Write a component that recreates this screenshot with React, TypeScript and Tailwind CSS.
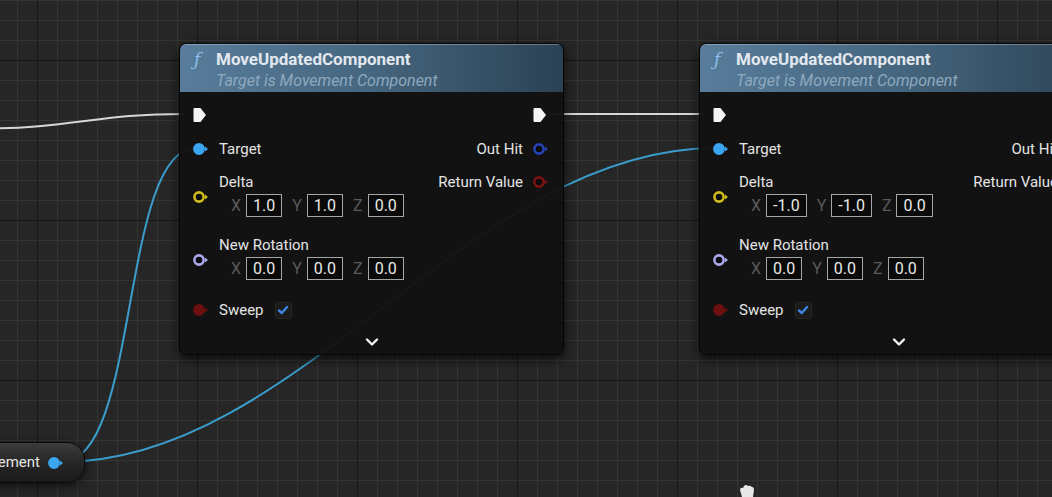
import React from "react";

const ff = "[font-family:Roboto,'Liberation_Sans',sans-serif]";

function ExecPin() {
  return (
    <svg width="14" height="16" viewBox="0 0 14 16">
      <path d="M1.5 1 H7.5 L13 8 L7.5 15 H1.5 Q0.5 15 0.5 14 V2 Q0.5 1 1.5 1 Z" fill="#f4f4f4" />
    </svg>
  );
}

function DataPin({ color, filled = false, arrow = true }: { color: string; filled?: boolean; arrow?: boolean }) {
  return (
    <svg width="16" height="14" viewBox="0 0 16 14">
      <circle cx="6" cy="7" r="4.6" fill={filled ? color : "#0c0c0c"} stroke={color} strokeWidth="2.6" />
      {arrow && <polygon points="12,4.5 15,7 12,9.5" fill={color} />}
    </svg>
  );
}

function Vec({ vals }: { vals: string[] }) {
  const axes = ["X", "Y", "Z"];
  return (
    <div className="flex items-center ml-[12px] h-[23px]">
      {vals.map((v, i) => (
        <div key={i} className={`flex items-center ${i > 0 ? "ml-[10px]" : ""}`}>
          <span className="text-[#5a5a5a] text-[16px] mr-[5px]">{axes[i]}</span>
          <span className="h-[23px] px-[6px] border-[1.5px] border-[#a6a6a6] bg-[#0a0a0a] text-[#e8e8e8] text-[16px] flex items-center">
            {v}
          </span>
        </div>
      ))}
    </div>
  );
}

function Node({ pos, delta }: { pos: string; delta: string[] }) {
  return (
    <div
      className={`absolute top-[43px] ${pos} h-[312px] rounded-[7px] border border-[#050505] bg-[#121212]/[0.96] shadow-[0_4px_12px_rgba(0,0,0,0.7)] overflow-hidden text-[#e4e4e4] ${ff}`}
    >
      <div className="h-[48px] bg-gradient-to-r from-[#587c9b] via-[#45667f] to-[#2b4254] shadow-[inset_0_1px_0_rgba(255,255,255,0.3)] flex pl-[14px] pt-[5px]">
        <span className="w-[16px] h-[20px] leading-[20px] text-[#8cc0ee] text-[17px] italic [font-family:'DejaVu_Serif',serif]">ƒ</span>
        <div className="ml-[6px] flex flex-col">
          <span className="h-[20px] leading-[20px] text-[17px] font-bold text-[#e2e8ef]">MoveUpdatedComponent</span>
          <span className="h-[20px] leading-[20px] mt-[2px] text-[16px] italic text-[#8eaabf]">Target is Movement Component</span>
        </div>
      </div>
      <div className="flex flex-col pt-[11px]">
        <div className="flex justify-between">
          <div className="flex flex-col pl-[13px] text-[15px]">
            <div className="h-[24px] flex items-center">
              <div className="w-[16px] flex"><ExecPin /></div>
            </div>
            <div className="h-[24px] flex items-center mt-[10px]">
              <div className="w-[16px] flex"><DataPin color="#3ba6f2" filled /></div>
              <span className="ml-[10px]">Target</span>
            </div>
            <div className="flex items-center mt-[11px]">
              <div className="w-[16px] flex mt-[5px]"><DataPin color="#d0bb1c" /></div>
              <div className="ml-[10px] flex flex-col">
                <span className="h-[20px] leading-[20px]">Delta</span>
                <div className="mt-[2px]"><Vec vals={delta} /></div>
              </div>
            </div>
            <div className="flex items-center mt-[18px]">
              <div className="w-[16px] flex mt-[5px]"><DataPin color="#a9a9ee" /></div>
              <div className="ml-[10px] flex flex-col">
                <span className="h-[20px] leading-[20px]">New Rotation</span>
                <div className="mt-[2px]"><Vec vals={["0.0", "0.0", "0.0"]} /></div>
              </div>
            </div>
            <div className="h-[24px] flex items-center mt-[18px]">
              <div className="w-[16px] flex"><DataPin color="#6e0f0f" filled /></div>
              <span className="ml-[10px]">Sweep</span>
              <div className="ml-[11px] w-[17px] h-[17px] rounded-[3px] bg-[#1b1b1b] border border-[#262626] flex items-center justify-center">
                <svg width="12" height="12" viewBox="0 0 12 12">
                  <path d="M2 6.5 L4.8 9 L10 3" fill="none" stroke="#3d86e6" strokeWidth="2.4" strokeLinecap="round" strokeLinejoin="round" />
                </svg>
              </div>
            </div>
          </div>
          <div className="flex flex-col items-end pr-[14px] text-[15px]">
            <div className="h-[24px] flex items-center">
              <div className="w-[16px] flex"><ExecPin /></div>
            </div>
            <div className="h-[24px] flex items-center mt-[10px]">
              <span className="mr-[10px]">Out Hit</span>
              <div className="w-[16px] flex"><DataPin color="#2442b4" /></div>
            </div>
            <div className="h-[24px] flex items-center mt-[9px]">
              <span className="mr-[10px]">Return Value</span>
              <div className="w-[16px] flex"><DataPin color="#7a1212" /></div>
            </div>
          </div>
        </div>
        <div className="h-[20px] mt-[10px] flex items-center justify-center">
          <svg width="14" height="10" viewBox="0 0 14 10">
            <path d="M2 2.5 L7 7.5 L12 2.5" fill="none" stroke="#f2f2f2" strokeWidth="2.4" strokeLinecap="round" strokeLinejoin="round" />
          </svg>
        </div>
      </div>
    </div>
  );
}

export default function App() {
  return (
    <div className="relative w-[1052px] h-[497px] overflow-hidden bg-[#262626] bg-[linear-gradient(to_right,#161616_1px,transparent_1px),linear-gradient(to_bottom,#161616_1px,transparent_1px),linear-gradient(to_right,#343434_1px,transparent_1px),linear-gradient(to_bottom,#343434_1px,transparent_1px)] [background-size:160px_160px,160px_160px,20px_20px,20px_20px] [background-position:37px_60px,37px_60px,17px_0px,17px_0px]">
      <svg className="absolute inset-0" width="1052" height="497">
        <path d="M -40 129 C 80 129, 90 114, 185 114" fill="none" stroke="#d6d6d6" strokeWidth="2" />
        <path d="M 550 114 L 705 114" fill="none" stroke="#d6d6d6" strokeWidth="2" />
        <path d="M 62 462 C 140 462, 120 148, 196 148" fill="none" stroke="#3a9dcc" strokeWidth="2" />
        <path d="M 62 462 C 300 462, 470 148, 716 148" fill="none" stroke="#3a9dcc" strokeWidth="2" />
      </svg>

      <Node pos="left-[179px] w-[385px]" delta={["1.0", "1.0", "0.0"]} />
      <Node pos="left-[699px] w-[400px]" delta={["-1.0", "-1.0", "0.0"]} />

      <div className={`absolute left-[-120px] top-[442px] w-[205px] h-[41px] rounded-r-[18px] border border-[#0a0a0a] bg-gradient-to-b from-[#3c3c3c] via-[#262626] to-[#1a1a1a] shadow-[0_3px_8px_rgba(0,0,0,0.6)] flex items-center justify-end pr-[20px] ${ff}`}>
        <span className="text-[15px] text-[#e4e4e4]">Movement</span>
        <div className="ml-[8px] flex"><DataPin color="#3ba6f2" filled /></div>
      </div>

      <svg className="absolute left-[738px] top-[484px]" width="20" height="13" viewBox="0 0 20 13">
        <path d="M4 13 L2 6 Q2 3 5 4 L6 2 Q8 0 10 2 Q12 1 14 3 Q16 3 16 6 L15 13 Z" fill="#e8e8e8" />
      </svg>
    </div>
  );
}
